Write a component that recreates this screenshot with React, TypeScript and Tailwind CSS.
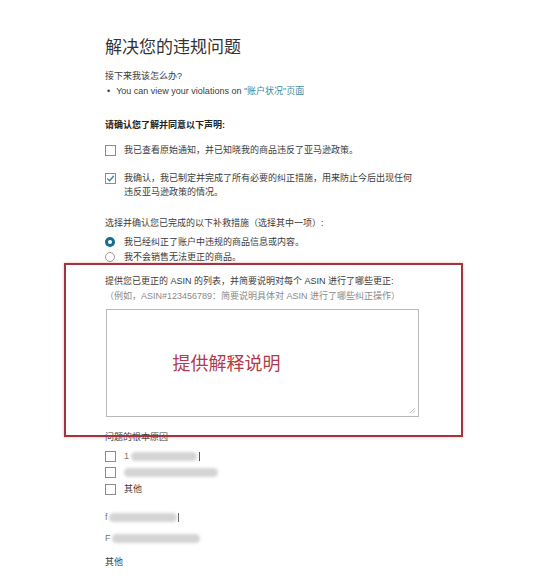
import React from "react";

function Box({ checked = false }: { checked?: boolean }) {
  return (
    <span className="relative flex h-[11px] w-[11px] shrink-0 items-center justify-center border border-[#8c8c8c] bg-white">
      {checked && (
        <svg viewBox="0 0 12 12" className="h-[9px] w-[9px]" fill="none">
          <path d="M2 6.5 L4.8 9 L10 3" stroke="#2b7e9c" strokeWidth="1.6" strokeLinecap="round" strokeLinejoin="round" />
        </svg>
      )}
    </span>
  );
}

function Radio({ checked = false }: { checked?: boolean }) {
  return checked ? (
    <span className="flex h-[10px] w-[10px] shrink-0 items-center justify-center rounded-full bg-[#146e8c]">
      <span className="h-[4px] w-[4px] rounded-full bg-white" />
    </span>
  ) : (
    <span className="h-[10px] w-[10px] shrink-0 rounded-full border border-[#9a9a9a] bg-white" />
  );
}

function Smudge({ w }: { w: string }) {
  return <span className={`block h-[9px] ${w} rounded-full bg-[#d4d4d4] blur-[1.5px]`} />;
}

export default function App() {
  return (
    <div
      className="h-[576px] w-[547px] overflow-hidden bg-white text-[9px] leading-[14px] text-[#3c3c3c]"
      style={{ fontFamily: '"Liberation Sans", "Noto Sans CJK SC", sans-serif' }}
    >
      <div className="flex flex-col pl-[105px] pt-[38px]">
        <h1 className="text-[17px] leading-[20px] text-[#333]">解决您的违规问题</h1>

        <p className="mt-[11px] leading-[15px]">接下来我该怎么办?</p>
        <p className="flex gap-[6px] pl-[2px] leading-[15px]">
          <span>•</span>
          <span>
            You can view your violations on <span className="text-[#3a8a9e]">"账户状况"页面</span>
          </span>
        </p>

        <p className="mt-[19px] font-bold text-[#222]">请确认您了解并同意以下声明:</p>

        <label className="mt-[11px] flex items-center gap-[8px]">
          <Box />
          <span>我已查看原始通知，并已知晓我的商品违反了亚马逊政策。</span>
        </label>

        <label className="mt-[14px] flex items-start gap-[8px]">
          <span className="pt-[2px]">
            <Box checked />
          </span>
          <span className="w-[289px]">我确认，我已制定并完成了所有必要的纠正措施，用来防止今后出现任何违反亚马逊政策的情况。</span>
        </label>

        <p className="mt-[17px]">选择并确认您已完成的以下补救措施（选择其中一项）:</p>
        <label className="mt-[5px] flex items-center gap-[9px]">
          <Radio checked />
          <span>我已经纠正了账户中违规的商品信息或内容。</span>
        </label>
        <label className="mt-[1px] flex items-center gap-[9px]">
          <Radio />
          <span>我不会销售无法更正的商品。</span>
        </label>

        <div className="relative">
          <p className="mt-[10px]">提供您已更正的 ASIN 的列表，并简要说明对每个 ASIN 进行了哪些更正:</p>
          <p className="mt-[1px] text-[#8a8a8a]">（例如，ASIN#123456789：简要说明具体对 ASIN 进行了哪些纠正操作）</p>
          <div className="relative ml-[1px] mt-[6px] flex h-[108px] w-[313px] items-center justify-center border border-[#b8b8b8] bg-white">
            <span className="mr-[72px] mt-[2px] text-[18px] leading-[22px] text-[#b23a4a]">提供解释说明</span>
            <svg viewBox="0 0 8 8" className="absolute bottom-[2px] right-[2px] h-[7px] w-[7px]">
              <path d="M7 1 L1 7 M7 4 L4 7" stroke="#aaa" strokeWidth="0.8" />
            </svg>
          </div>
          <p className="mt-[13px] text-[#444]">问题的根本原因</p>

          <div className="pointer-events-none absolute left-[-41px] top-[-1px] h-[174px] w-[399px] border-2 border-[#a3343f] shadow-[0_0_3px_rgba(220,90,90,0.45)]" />
        </div>

        <div className="mt-[5px] flex flex-col gap-[4px]">
          <div className="flex items-center gap-[8px]">
            <Box />
            <span className="flex items-center gap-[2px]">
              <span className="text-[#777]">1</span>
              <Smudge w="w-[66px]" />
              <span className="h-[9px] w-px bg-[#555]" />
            </span>
          </div>
          <div className="flex items-center gap-[8px]">
            <Box />
            <Smudge w="w-[94px]" />
          </div>
          <div className="flex items-center gap-[8px]">
            <Box />
            <span>其他</span>
          </div>
        </div>

        <div className="mt-[14px] flex items-center gap-[1px]">
          <span className="text-[#777]">f</span>
          <Smudge w="w-[68px]" />
          <span className="h-[9px] w-px bg-[#666]" />
        </div>
        <div className="mt-[7px] flex items-center gap-[1px]">
          <span className="text-[#777]">F</span>
          <Smudge w="w-[88px]" />
        </div>
        <p className="mt-[10px]">其他</p>
      </div>
    </div>
  );
}
